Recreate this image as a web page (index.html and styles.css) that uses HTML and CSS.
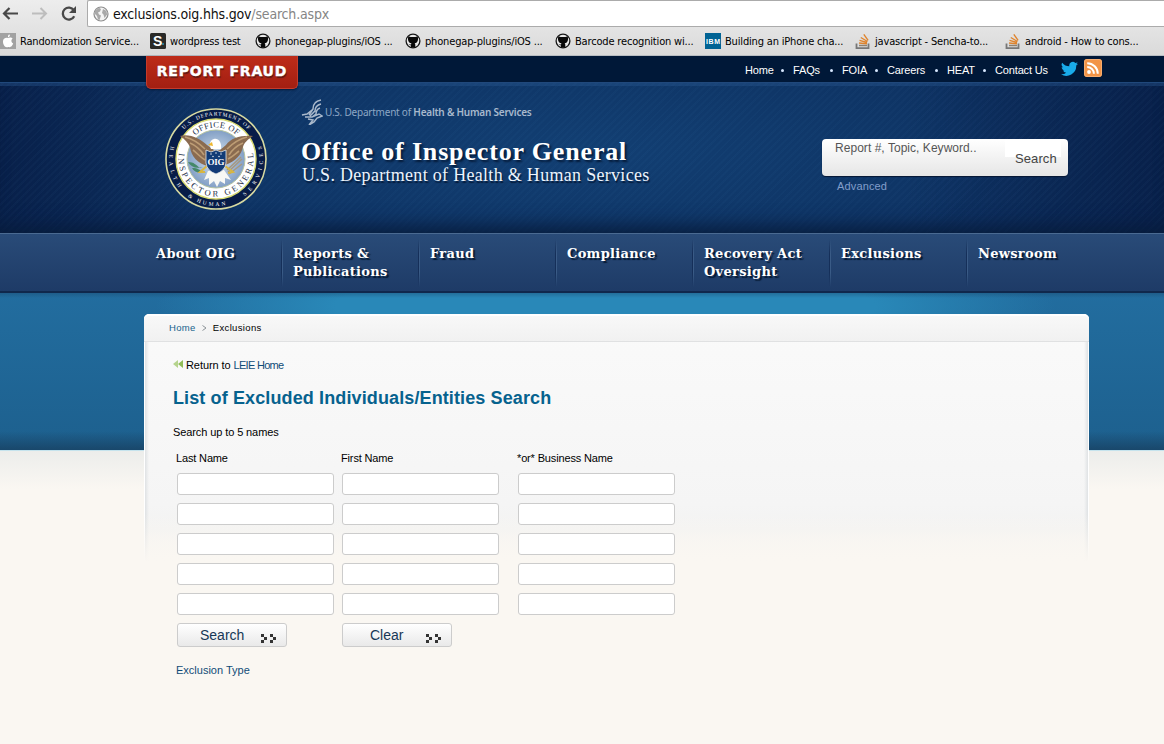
FILE: index.html
```html
<!DOCTYPE html>
<html lang="en">
<head>
<meta charset="utf-8">
<title>List of Excluded Individuals/Entities Search</title>
<link rel="stylesheet" href="styles.css">
</head>
<body>
<svg class="defs" width="0" height="0">
  <defs>
    <symbol id="github" viewBox="0 0 16 16">
      <circle cx="8" cy="8" r="6.9" fill="#e9e9e9" stroke="#171717" stroke-width="1.3"/>
      <path d="M3.5 3.2l2 .9h5l2-.9c.7 1.300.7 3 .3 4.300-.4 1.700-1.500 2.500-3.100 2.800l.6 1.200v3H5.900v-2l-2.400-1.200 2.500.3.400-1.300c-1.700-.3-2.800-1.100-3.200-2.800-.3-1.300-.3-3 .3-4.300z" fill="#080808"/>
    </symbol>
    <symbol id="stack" viewBox="0 0 16 16">
      <path d="M1.500 10.500v4.600h12v-4.600" fill="none" stroke="#777" stroke-width="1.8"/>
      <path d="M4 12.500h8" stroke="#8d8173" stroke-width="1.5"/>
      <path d="M4 10l8 .8M4.500 7.400l7.600 2.100M5.800 4.500l6.700 4M8.800 1.300l4.300 6" stroke="#df842d" stroke-width="1.400"/>
    </symbol>
    <symbol id="dots" viewBox="0 0 16 9">
      <path d="M0 0h3v3H0zM3 3h3v3H3zM0 6h3v3H0zM9 0h3v3H9zM12 3h3v3h-3zM9 6h3v3H9z" fill="#333"/>
    </symbol>
  </defs>
</svg>

<div class="browser">
  <div class="toolbar">
    <svg width="87" height="27" viewBox="0 0 87 27" fill="none">
      <path d="M4 13.500h14M9.500 8L4 13.500 9.500 19" stroke="#484848" stroke-width="2.200"/>
      <path d="M32 13.500h14M40.500 8l5.500 5.500-5.500 5.500" stroke="#bdbdbd" stroke-width="2"/>
      <path d="M73.800 10.200a6 6 0 1 0 .4 6" stroke="#484848" stroke-width="2.300"/>
      <path d="M76 6v7h-7z" fill="#484848"/>
    </svg>
    <div class="address">
      <svg width="16" height="16" viewBox="0 0 16 16">
        <circle cx="8" cy="8" r="7" fill="#f4f4f4" stroke="#8d8d8d" stroke-width="1.200"/>
        <path d="M2 5l4-3.200 2 1.200-1 2.500-2 1 1 2 2 1-1.500 4.500-1.500-.4-1-3.600-2-2zM10 3l3.500 2 .6 3.500-2.600 3.500-1-3.500-1.500-1.500z" fill="#a9a9a9"/>
      </svg>
      <span class="url">exclusions.oig.hhs.gov<span class="path">/search.aspx</span></span>
    </div>
  </div>
  <div class="bookmarks">
    <div class="bookmark"><svg width="16" height="16"><rect width="16" height="16" fill="#a2a2a2"/><path d="M9 1.500c1.500 0 1 2.500-1 2.700C7.900 3 8.300 2 9 1.500zM8 5c1.500-1 4-.6 4.700.6-2 1.300-1.600 4 .5 5C12 13.500 10.800 14.600 8.200 14 6 14.500 5 14 3.700 11.700 2 8 3.500 3.700 8 5z" fill="#fff"/></svg><span>Randomization Service...</span></div>
    <div class="bookmark"><svg width="16" height="16"><rect width="16" height="16" rx="1.500" fill="#292a28"/><text x="3" y="13" class="s-mark">S</text><circle cx="13" cy="11" r="1" fill="#2994b5"/></svg><span>wordpress test</span></div>
    <div class="bookmark"><svg width="16" height="16"><use href="#github"/></svg><span>phonegap-plugins/iOS ...</span></div>
    <div class="bookmark"><svg width="16" height="16"><use href="#github"/></svg><span>phonegap-plugins/iOS ...</span></div>
    <div class="bookmark"><svg width="16" height="16"><use href="#github"/></svg><span>Barcode recognition wi...</span></div>
    <div class="bookmark"><svg width="16" height="16"><rect width="16" height="16" fill="#006394"/><text x="1" y="10.500" textLength="14" class="ibm-mark">IBM</text></svg><span>Building an iPhone cha...</span></div>
    <div class="bookmark"><svg width="16" height="16"><use href="#stack"/></svg><span>javascript - Sencha-to...</span></div>
    <div class="bookmark"><svg width="16" height="16"><use href="#stack"/></svg><span>android - How to cons...</span></div>
  </div>
</div>

<div class="utility">
  <a class="report">REPORT FRAUD</a>
  <div class="links"><a>Home</a><a>FAQs</a><a>FOIA</a><a>Careers</a><a>HEAT</a><a>Contact Us</a></div>
  <svg class="twitter" width="17" height="16" viewBox="0 0 24 22"><path d="M24 3.500a10 10 0 0 1-2.800.8A5 5 0 0 0 23.300 1.500a10 10 0 0 1-3.100 1.200 4.900 4.900 0 0 0-8.400 4.500A14 14 0 0 1 1.700 2a4.900 4.900 0 0 0 1.500 6.600A5 5 0 0 1 1 8a4.900 4.900 0 0 0 3.900 4.800 5 5 0 0 1-2.200.1 4.900 4.900 0 0 0 4.600 3.400A9.900 9.900 0 0 1 0 18.400a14 14 0 0 0 21.500-12.400A10 10 0 0 0 24 3.500z" fill="#19abea"/></svg>
  <svg class="rss" width="18" height="18" viewBox="0 0 18 18"><rect width="18" height="18" rx="3" fill="#f29447"/><rect x=".5" y=".5" width="17" height="17" rx="2.500" fill="none" stroke="#f7ad70"/><circle cx="5" cy="13" r="1.900" fill="#fff"/><path d="M3.200 8.100a6.700 6.700 0 0 1 6.700 6.700M3.200 4.200a10.600 10.600 0 0 1 10.600 10.600" fill="none" stroke="#fff" stroke-width="2"/></svg>
</div>

<header class="banner">
  <svg class="seal" width="104" height="104" viewBox="-52 -52 104 104">
    <defs>
      <radialGradient id="sky"><stop offset="0" stop-color="#dce8f3"/><stop offset="1" stop-color="#829fc5"/></radialGradient>
      <path id="outer" d="M0 43.500A43.500 43.500 0 0 1 0-43.500A43.500 43.500 0 0 1 0 43.500"/>
      <path id="inner" d="M0 31.500A31.500 31.500 0 0 1 0-31.500A31.500 31.500 0 0 1 0 31.500"/>
      <path id="base" d="M0-37.500A37.500 37.500 0 0 0 0 37.500A37.500 37.500 0 0 0 0-37.500"/>
      <path id="rim" d="M0-47A47 47 0 0 0 0 47A47 47 0 0 0 0-47"/>
    </defs>
    <circle r="50" fill="#071c48" stroke="#d7d9a1" stroke-width="1.600"/>
    <circle r="40" fill="#fff" stroke="#d9db72" stroke-width="1.400"/>
    <circle r="29" fill="url(#sky)" stroke="#b5c3a0"/>
    <path d="M-13 8c-7 2-12 0-15-5 6 0 8 3 12 6M-10 13c-7 2-12 0-14-4 6 0 8 2 12 5" fill="#448869"/>
    <path d="M12 13L26 0M13 15L26 5M11 11L25-2" stroke="#a69880" stroke-width="1.500"/>
    <path d="M-8 6l-8 7 5 0M9 7l8 6-5 1" stroke="#d8b640" stroke-width="2" fill="none"/>
    <path d="M-8 7C-18 5-25-3-26-12c-2-4-5-8-10-11C-27-26-15-20-9-14L-2-9 4-9l6-5c5-7 15-10 27-9-5 3-9 7-10 11-2 8-7 14-18 18l-4 9H-4z" fill="#8a6b50"/>
    <path d="M-31-22c8 2 14 6 20 12M-26-16c7 3 10 6 14 12M-23-9c4 3 7 7 12 10M31-22c-8 2-14 6-20 12M27-16c-7 3-11 7-14 12M23-8c-4 3-7 6-11 8" fill="none" stroke="#bd9d75" stroke-width="1.600"/>
    <path d="M-5-10c-2-5-1-9 3-10 4-1 8 3 7 10z" fill="#fff"/><path d="M-4-17l-4 3 5 1z" fill="#edb62d"/>
    <path d="M-8 12L-12 21l5-2 0 7 5-4 3 6 3-6 5 3 0-6 6 2-7-10z" fill="#f7f8f5"/>
    <path d="M-10-9l5 2 5-2 5 2 5-2v13q-1 8-10 11-9-3-10-11z" fill="#123b76" stroke="#e7e9e7" stroke-width=".8"/>
    <g fill="#fff"><circle cx="-5" cy="-5" r=".7"/><circle cy="-6" r=".7"/><circle cx="5" cy="-5" r=".7"/><circle cx="-3" cy="-2.500" r=".7"/><circle cx="3" cy="-2.500" r=".7"/></g>
    <g class="seal-rim">
      <text><textPath href="#outer" startOffset="50%" text-anchor="middle" textLength="72">U.S. DEPARTMENT OF</textPath></text>
      <text><textPath href="#rim" startOffset="28%" text-anchor="middle" textLength="44">HEALTH</textPath></text>
      <text><textPath href="#rim" startOffset="46.500%" text-anchor="middle" textLength="40">&amp; HUMAN</textPath></text>
      <text><textPath href="#rim" startOffset="70%" text-anchor="middle" textLength="56">SERVICES</textPath></text>
    </g>
    <g class="seal-name">
      <text><textPath href="#inner" startOffset="50%" text-anchor="middle" textLength="46">OFFICE OF</textPath></text>
      <text><textPath href="#base" startOffset="50%" text-anchor="middle" textLength="130">INSPECTOR GENERAL</textPath></text>
    </g>
    <text x="-8.500" y="6" textLength="17" class="seal-oig">OIG</text>
  </svg>
  <div class="identity">
    <div class="hhs"><svg width="22" height="26" viewBox="0 0 22 26" fill="none" stroke="#aab9cb" stroke-width="1.500"><path d="M20 1C14 2 12 5 12 10L8 16M20 5c-4 1-6 3-6 7l-5 5M19 9c-3 1-4 3-4 6l-4 3M1 16l5-1 5-4M4 18h7l7-3 3 2-5 2-3 4-5 3 4-5-5-1"/></svg><span>U.S. Department of <b>Health &amp; Human Services</b></span></div>
    <div class="agency"><span>Office of Inspector General</span></div>
    <div class="department"><span>U.S. Department of Health &amp; Human Services</span></div>
  </div>
  <div class="site-search">
    <div class="search-box"><span class="placeholder">Report #, Topic, Keyword..</span><span class="go">Search</span></div>
    <a>Advanced</a>
  </div>
</header>

<nav class="main-nav">
  <a class="first"><span>About OIG</span></a><a><span>Reports &amp;<br>Publications</span></a><a><span>Fraud</span></a><a><span>Compliance</span></a><a><span>Recovery Act<br>Oversight</span></a><a><span>Exclusions</span></a><a><span>Newsroom</span></a>
</nav>

<main class="stage">
  <section class="panel">
    <div class="crumbs"><a>Home</a><svg width="5" height="6" viewBox="0 0 5 6"><path d="M.5.5L4 3 .5 5.500" fill="none" stroke="#8b9297"/></svg><span>Exclusions</span></div>
    <div class="content">
      <div class="return"><svg width="11" height="9" viewBox="0 0 11 9"><path d="M5 0v8L0 4z" fill="#b5d38d"/><path d="M10 0v8L5 4z" fill="#91bd59"/></svg><span>Return to <a>LEIE Home</a></span></div>
      <h1>List of Excluded Individuals/Entities Search</h1>
      <p>Search up to 5 names</p>
      <form class="names">
        <label>Last Name</label><label>First Name</label><label>*or* Business Name</label>
        <input><input><input>
        <input><input><input>
        <input><input><input>
        <input><input><input>
        <input><input><input>
        <button type="button"><span>Search</span><svg width="16" height="9"><use href="#dots"/></svg></button>
        <button type="button" class="clear"><span>Clear</span><svg width="16" height="9"><use href="#dots"/></svg></button>
      </form>
      <a class="type">Exclusion Type</a>
    </div>
  </section>
</main>
</body>
</html>
```
FILE: styles.css
```css
* { box-sizing: border-box; }
body { margin: 0; width: 1164px; height: 744px; overflow: hidden; background: #faf7f2; font: 11px/13px "Liberation Sans", Arial, sans-serif; color: #000; }
svg { display: block; flex: none; }
.defs { position: absolute; }
span, a, label { white-space: nowrap; }

.browser { height: 56px; background: linear-gradient(#ededed, #dadada); border-bottom: 1px solid #b8bdc2; }
.toolbar { height: 27px; display: flex; }
.address { width: 1077px; height: 27px; display: flex; align-items: center; gap: 4px; padding-left: 5px; background: #fff; border: 1px solid #ababab; border-right: 0; border-radius: 2px 0 0 2px; }
.url { font: 14px/18px "DejaVu Sans Condensed", "DejaVu Sans", sans-serif; font-stretch: condensed; letter-spacing: -.18px; color: #111; }
.path { color: #858585; }
.bookmarks { height: 28px; display: grid; grid-template-columns: 150px 105px 150px 150px 150px 150px 150px 159px; align-items: center; }
.bookmark { display: flex; gap: 4px; font: 11px/14px "DejaVu Sans Condensed", "DejaVu Sans", sans-serif; font-stretch: condensed; letter-spacing: -.17px; }
.bookmark span { padding-top: 2px; }
.s-mark { font: bold 14px "Liberation Sans", sans-serif; fill: #fff; }
.ibm-mark { font: bold 7px "Liberation Sans", sans-serif; fill: #fff; letter-spacing: 0; }

.utility { height: 27px; display: flex; align-items: flex-start; background: #001838; border-bottom: 1px solid #20487b; padding-left: 146px; }
.report { width: 152px; height: 33px; flex: none; position: relative; z-index: 2; background: linear-gradient(#bd2c19, #a31f12); border: solid #c43b2b; border-width: 0 1px 1px; border-radius: 0 0 5px 5px; box-shadow: 0 1px 2px #061937; color: #fff; text-align: center; font: bold 14px/30px "DejaVu Sans", Verdana, sans-serif; letter-spacing: .8px; -webkit-text-stroke: .4px #fff; text-shadow: 1px 2px 1px #621912; }
.links { display: grid; grid-template-columns: 48px 49px 45px 60px 48px 66px; margin-left: 447px; padding-top: 8px; color: #fff; }
.links a { letter-spacing: -.15px; display: flex; align-items: center; }
.links a:not(:last-child)::after { content: ""; width: 3px; height: 3px; border-radius: 50%; background: #d6e7ff; margin-left: auto; margin-right: 9px; }
.twitter { margin-top: 5px; }
.rss { margin: 3px 0 0 6px; }

.banner { height: 150px; display: flex; background: repeating-linear-gradient(135deg, transparent 0 3px, rgba(90, 150, 210, .035) 3px 5px), linear-gradient(90deg, #08204a 0, transparent 18%, transparent 78%, #08204a 100%), radial-gradient(ellipse 700px 180px at 50% 45%, #123f73, #0b2b59); border-top: 3px solid rgba(45, 94, 151, .35); box-shadow: inset 0 -18px 20px -12px #071b3b; }
.seal { margin: 21px 0 0 164px; }
.seal-rim { font: 5.500px "Liberation Serif", serif; fill: #fff; }
.seal-name { font: 8.500px "Liberation Serif", serif; fill: #24304a; }
.seal-oig { font: bold 9px "Liberation Serif", serif; fill: #fff; }
.identity { width: 400px; margin: 13px 0 0 33px; }
.hhs { height: 27px; display: flex; gap: 2px; color: #8da7c5; font: 10px/27px "Noto Sans", sans-serif; letter-spacing: -.22px; }
.hhs b { font-weight: 600; color: #a8b9cd; }
.agency { margin-top: 11px; color: #fff; font: bold 26px/29px "Liberation Serif", Georgia, serif; text-shadow: 2px 2px 2px #051b3a; letter-spacing: .84px; }
.department { margin-left: 1px; color: #edf4fc; font: 18px/18px "Liberation Serif", Georgia, serif; text-shadow: 1px 2px 1px #051b3a; letter-spacing: .3px; }
.site-search { margin: 53px 0 0 121px; color: #829ecb; }
.search-box { width: 246px; height: 37px; display: flex; background: linear-gradient(#fff, #e6e6e6); border-radius: 4px; box-shadow: 0 1px 1px #061733; color: #555; font-size: 12px; }
.placeholder { width: 171px; padding: 3px 0 0 13px; letter-spacing: .04px; }
.go { width: 70px; padding: 13px 0 0 22px; color: #444; font-size: 13px; letter-spacing: .1px; background: linear-gradient(#fff, #fff) 12px 0 / 56px 18px no-repeat; }
.site-search > a { display: block; margin: 4px 0 0 15px; letter-spacing: .15px; }

.main-nav { height: 60px; display: grid; grid-template-columns: repeat(6, 137px) 197px; padding-left: 145px; background: linear-gradient(#294b78, #1e3b67); border-top: 1px solid #4a6a91; border-bottom: 2px solid #10284c; }
.main-nav a { margin-left: -1px; padding: 11px 0 0 12px; color: #fff; font: bold 13px/18px "DejaVu Serif", serif; letter-spacing: .3px; text-shadow: 2px 2px 1px #071a34; background: linear-gradient(transparent, #152f59 30%, #152f59 70%, transparent) 0 5px / 1px 48px no-repeat, linear-gradient(transparent, #3a5b86 30%, #3a5b86 70%, transparent) 1px 5px / 1px 48px no-repeat; }
.main-nav .first { background: none; }

.stage { height: 451px; padding: 21px 0 0 144px; background: linear-gradient(rgba(24, 63, 98, .35), transparent 5px) 0 0 / 100% 157px no-repeat, linear-gradient(transparent 88%, rgba(24, 65, 98, .8)) 0 0 / 100% 157px no-repeat, radial-gradient(ellipse 450px 55px at 52% 8%, #2988b8 60%, transparent) 0 0 / 100% 157px no-repeat, linear-gradient(#226d9f, #1d608e) 0 0 / 100% 157px no-repeat, linear-gradient(#c5e3ed, #c5e3ed) 0 157px / 100% 1px no-repeat, linear-gradient(#ecedeb, #faf7f2) 0 158px / 100% 38px no-repeat, #faf7f2; }
.panel { width: 945px; height: 430px; border-radius: 5px 5px 0 0; background: linear-gradient(transparent 200px, #faf7f2 248px), linear-gradient(90deg, #fff 1px, #dfe2e4 1px, transparent 5px, transparent 940px, #dfe2e4 944px, #fff 944px) 0 0 / 100% 248px no-repeat, linear-gradient(#fafafa, #f5f5f5 190px, #f3f3f2 215px, #faf7f2 250px); }
.crumbs { height: 28px; display: flex; align-items: center; gap: 6px; padding: 0 0 2px 25px; border-top: 2px solid #fff; border-bottom: 1px solid #e0e1e2; border-radius: 5px 5px 0 0; background: linear-gradient(#f8f8f8, #f1f1f1); font-size: 9.500px; letter-spacing: .35px; }
a { color: inherit; }
.crumbs a { color: #17638c; }
.content { padding: 16px 0 0 28px; }
.return { display: flex; gap: 2px; height: 15px; line-height: 15px; padding-left: 1px; }
.return svg { margin-top: 2px; }
.return span { letter-spacing: -.08px; }
.return a, .type { color: #104c78; }
.return span a { letter-spacing: -.7px; }
h1 { margin: 14px 0 0 1px; color: #06628e; font: bold 18px/22px "Liberation Sans", Arial, sans-serif; letter-spacing: .12px; white-space: nowrap; }
p { margin: 16px 0 0; padding-left: 1px; line-height: 14px; letter-spacing: -.1px; }
.names { display: grid; grid-template-columns: 165px 176px 158px; grid-template-rows: 14px repeat(6, 22px); row-gap: 8px; justify-items: start; margin: 12px 0 0 5px; }
.names label { margin-left: -1px; line-height: 14px; letter-spacing: -.15px; }
.names input { width: 157px; height: 22px; padding: 0 4px; background: #fff; border: 1px solid #ccc; border-radius: 3px; outline: 0; }
.names button { width: 110px; height: 24px; display: flex; align-items: flex-start; padding: 3px 0 0 22px; border: 1px solid #ccc; border-radius: 3px; background: linear-gradient(#fff, #e9e9e9); color: #173856; font: 14px/16px "Liberation Sans", Arial, sans-serif; }
.names button svg { margin: 7px 9px 0 auto; }
.names .clear { padding-left: 27px; }
.type { display: block; margin: 19px 0 0 4px; }
```
